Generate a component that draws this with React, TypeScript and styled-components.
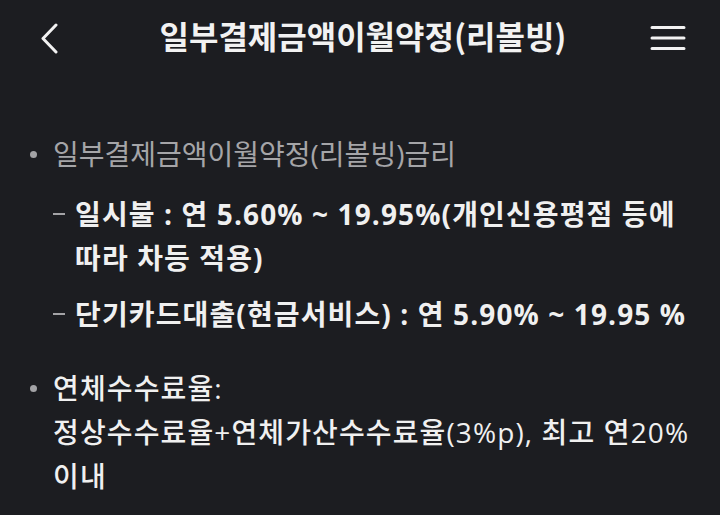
import React from "react";
import styled, { createGlobalStyle } from "styled-components";

const GlobalStyle = createGlobalStyle`
  html, body {
    margin: 0;
    padding: 0;
    background: #1c1d21;
  }
  body {
    font-family: "Noto Sans CJK KR", "Noto Sans", sans-serif;
    -webkit-font-smoothing: antialiased;
  }
`;

const Screen = styled.div`
  width: 720px;
  height: 515px;
  background: #1c1d21;
  overflow: hidden;
  display: flex;
  flex-direction: column;
`;

const Header = styled.header`
  height: 70px;
  display: flex;
  align-items: center;
  padding: 6px 34px 0 40px;
  box-sizing: border-box;
`;

const IconButton = styled.button<{ $align?: string }>`
  width: 36px;
  height: 36px;
  padding: 0;
  border: 0;
  background: transparent;
  display: flex;
  align-items: center;
  justify-content: ${(p) => p.$align || "center"};
  color: #f2f2f2;
`;

const Title = styled.h1`
  flex: 1;
  margin: -6px 0 0;
  text-align: center;
  font-size: 32px;
  font-weight: 700;
  letter-spacing: 0;
  color: #f2f2f2;
  line-height: 40px;
`;

const Body = styled.main`
  padding: 62px 20px 0 27px;
  display: flex;
  flex-direction: column;
`;

const Item = styled.div<{ $gap?: number }>`
  display: flex;
  align-items: flex-start;
  margin-top: ${(p) => p.$gap ?? 0}px;
`;

const Dot = styled.span`
  flex: 0 0 26px;
  height: 44px;
  display: flex;
  align-items: center;
  &::before {
    content: "";
    width: 7px;
    height: 7px;
    margin-left: 3px;
    border-radius: 50%;
    background: #a3a3a6;
  }
`;

const Dash = styled.span`
  flex: 0 0 22px;
  height: 44px;
  display: flex;
  align-items: center;
  &::before {
    content: "";
    width: 12px;
    height: 2px;
    background: #a3a3a6;
  }
`;

const Text = styled.p<{ $tone: "muted" | "strong" | "plain" }>`
  flex: 1;
  margin: 0;
  font-family: "Open Sans", "Noto Sans CJK KR", sans-serif;
  font-size: 28px;
  line-height: 44px;
  letter-spacing: ${(p) => (p.$tone === "muted" ? 0 : 1.12)}px;
  word-break: keep-all;
  color: ${(p) => (p.$tone === "muted" ? "#a5a5a8" : "#f0f0f0")};
  font-weight: ${(p) => (p.$tone === "strong" ? 700 : p.$tone === "plain" ? 500 : 400)};
`;

const SubList = styled.div`
  padding-left: 26px;
  display: flex;
  flex-direction: column;
`;

function Chevron() {
  return (
    <svg width="18" height="31" viewBox="0 0 18 31" fill="none">
      <path d="M16 2 L3 15.5 L16 29" stroke="currentColor" strokeWidth="3" strokeLinecap="round" strokeLinejoin="round" />
    </svg>
  );
}

function Menu() {
  return (
    <svg width="36" height="26" viewBox="0 0 36 26" fill="none">
      <path d="M2 2.5 H34 M2 13 H34 M2 23.5 H34" stroke="currentColor" strokeWidth="3" strokeLinecap="round" />
    </svg>
  );
}

export default function App() {
  return (
    <Screen>
      <GlobalStyle />
      <Header>
        <IconButton $align="flex-start" aria-label="뒤로">
          <Chevron />
        </IconButton>
        <Title>일부결제금액이월약정(리볼빙)</Title>
        <IconButton aria-label="메뉴">
          <Menu />
        </IconButton>
      </Header>
      <Body>
        <Item>
          <Dot />
          <Text $tone="muted">일부결제금액이월약정(리볼빙)금리</Text>
        </Item>
        <SubList>
          <Item $gap={16}>
            <Dash />
            <Text $tone="strong">
              일시불 : 연 5.60% ~ 19.95%(개인신용평점 등에 따라 차등 적용)
            </Text>
          </Item>
          <Item $gap={12}>
            <Dash />
            <Text $tone="strong">단기카드대출(현금서비스) : 연 5.90% ~ 19.95 %</Text>
          </Item>
        </SubList>
        <Item $gap={30}>
          <Dot />
          <Text $tone="plain">
            연체수수료율:
            <br />
            정상수수료율+연체가산수수료율(3%p), 최고 연20% 이내
          </Text>
        </Item>
      </Body>
    </Screen>
  );
}
